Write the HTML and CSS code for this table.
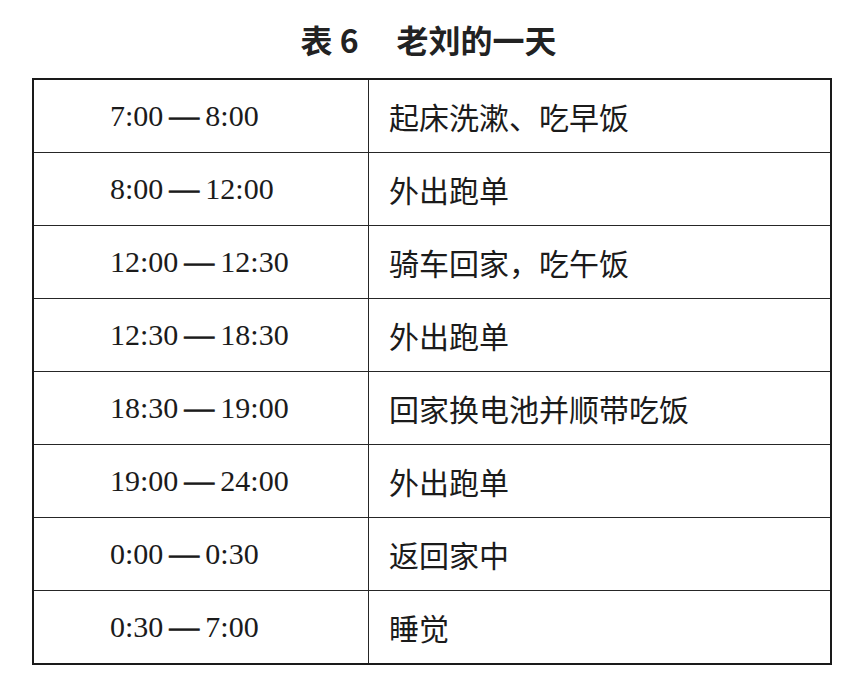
FILE: index.html
```html
<!DOCTYPE html>
<html lang="zh">
<head>
<meta charset="utf-8">
<link rel="stylesheet" href="styles.css">
</head>
<body>
<h1 class="title">表 6<span class="title-gap"></span>老刘的一天</h1>
<table class="schedule">
  <tr><td class="time">7:00<span class="dash">—</span>8:00</td><td class="act">起床洗漱、吃早饭</td></tr>
  <tr><td class="time">8:00<span class="dash">—</span>12:00</td><td class="act">外出跑单</td></tr>
  <tr><td class="time">12:00<span class="dash">—</span>12:30</td><td class="act">骑车回家，吃午饭</td></tr>
  <tr><td class="time">12:30<span class="dash">—</span>18:30</td><td class="act">外出跑单</td></tr>
  <tr><td class="time">18:30<span class="dash">—</span>19:00</td><td class="act">回家换电池并顺带吃饭</td></tr>
  <tr><td class="time">19:00<span class="dash">—</span>24:00</td><td class="act">外出跑单</td></tr>
  <tr><td class="time">0:00<span class="dash">—</span>0:30</td><td class="act">返回家中</td></tr>
  <tr><td class="time">0:30<span class="dash">—</span>7:00</td><td class="act">睡觉</td></tr>
</table>
</body>
</html>
```
FILE: styles.css
```css
html, body {
  margin: 0;
  padding: 0;
  background: #ffffff;
}
body {
  padding-top: 19px;
  color: #1b1b1b;
}
.title {
  margin: 0;
  height: 40px;
  line-height: 40px;
  text-align: center;
  font-family: "Noto Sans CJK SC", sans-serif;
  font-weight: 700;
  font-size: 32px;
  color: #222;
}
.title-gap {
  display: inline-block;
  width: 38px;
}
.schedule {
  margin: 19px 0 0 32px;
  width: 800px;
  border: 2px solid #1a1a1a;
  border-spacing: 0;
  border-collapse: separate;
}
.schedule td {
  height: 72px;
  padding: 0;
  vertical-align: middle;
  border-top: 1px solid #262626;
  white-space: nowrap;
}
.schedule tr:first-child td {
  border-top: none;
}
.time {
  width: 258px;
  padding-left: 76px !important;
  border-right: 1px solid #262626;
  font-family: "Liberation Serif", "Times New Roman", serif;
  font-size: 30px;
  color: #1b1b1b;
}
.dash {
  display: inline-block;
  margin: 0 6px;
  -webkit-text-stroke: 0.6px #1b1b1b;
}
.act {
  padding-left: 20px !important;
  font-family: "Noto Sans CJK SC", sans-serif;
  font-size: 30px;
  color: #1b1b1b;
}
```
